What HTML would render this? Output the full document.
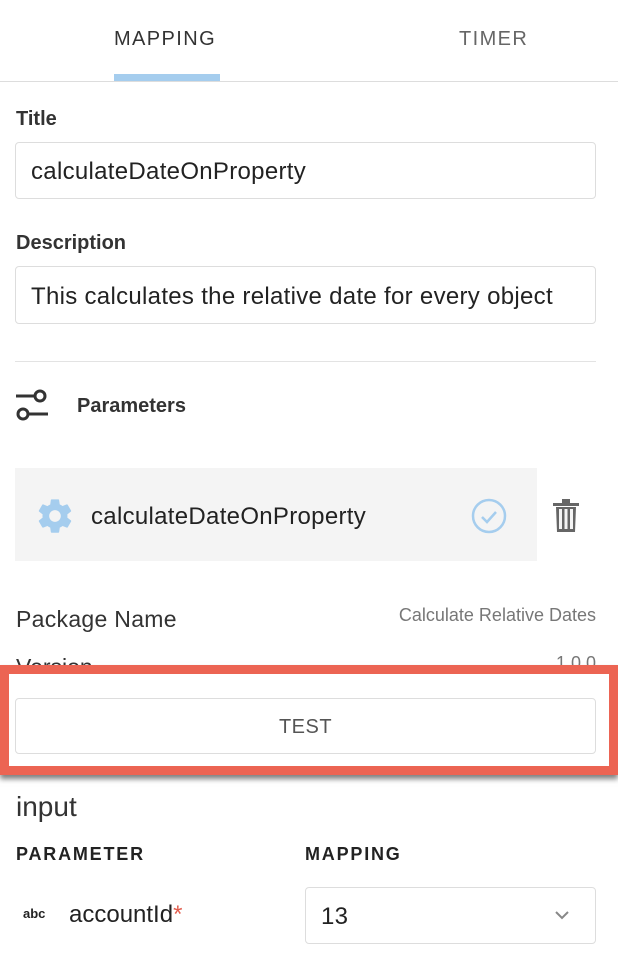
<!DOCTYPE html>
<html><head><style>
*{box-sizing:border-box;margin:0;padding:0}
body{width:618px;height:964px;overflow:hidden;background:#fff;font-family:"Liberation Sans",sans-serif;color:#333;position:relative}
.a{position:absolute;white-space:nowrap}
.inp{position:absolute;border:1px solid #ddd;border-radius:4px;background:#fff;font-size:24px;padding-left:15px;display:flex;align-items:center;overflow:hidden;color:#222;letter-spacing:.3px}
.lbl{font-weight:bold;font-size:20px;color:#333}
</style></head><body>
<div class="a" style="left:114px;top:28px;font-size:20px;letter-spacing:1.4px;color:#333;font-weight:500">MAPPING</div>
<div class="a" style="left:459px;top:28px;font-size:20px;letter-spacing:1.4px;color:#666">TIMER</div>
<div class="a" style="left:114px;top:74px;width:106px;height:7px;background:#a5cdee"></div>
<div class="a" style="left:0;top:81px;width:618px;height:1px;background:#ddd"></div>

<div class="a lbl" style="left:16px;top:108px">Title</div>
<div class="inp" style="left:15px;top:142px;width:581px;height:57px;padding-top:3px">calculateDateOnProperty</div>
<div class="a lbl" style="left:16px;top:232px">Description</div>
<div class="inp" style="left:15px;top:266px;width:581px;height:58px;padding-top:3px">This calculates the relative date for every object</div>
<div class="a" style="left:15px;top:361px;width:581px;height:1px;background:#e3e3e3"></div>

<svg class="a" style="left:16px;top:388px" width="32" height="34" viewBox="0 0 32 34"><g stroke="#333" stroke-width="3" fill="none"><line x1="0" y1="8" x2="20" y2="8"/><circle cx="24" cy="8" r="5"/><line x1="12" y1="26" x2="32" y2="26"/><circle cx="7" cy="26" r="5"/></g></svg>
<div class="a lbl" style="left:77px;top:395px">Parameters</div>

<div class="a" style="left:15px;top:468px;width:522px;height:93px;background:#f4f4f4"></div>
<svg class="a" style="left:35px;top:496px" width="40" height="40" viewBox="0 0 24 24"><path fill="#a5cdee" d="M19.4 13c.04-.33.06-.66.06-1s-.02-.67-.06-1l2.1-1.65c.2-.15.25-.42.12-.64l-2-3.46c-.12-.22-.39-.3-.61-.22l-2.49 1c-.52-.4-1.080-.73-1.69-.98l-.38-2.65C14.46 2.18 14.25 2 14 2h-4c-.25 0-.46.18-.49.42l-.38 2.65c-.61.25-1.170.59-1.69.98l-2.49-1c-.23-.09-.49 0-.61.22l-2 3.46c-.13.22-.07.49.12.64L4.57 11c-.04.33-.07.67-.07 1s.03.67.07 1l-2.11 1.65c-.19.15-.24.42-.12.64l2 3.46c.12.22.39.3.61.22l2.49-1c.52.4 1.08.73 1.69.98l.38 2.65c.03.24.24.42.49.42h4c.25 0 .46-.18.49-.42l.38-2.65c.61-.25 1.17-.59 1.69-.98l2.49 1c.23.09.49 0 .61-.22l2-3.46c.12-.22.07-.49-.12-.64L19.4 13zM12 15.5c-1.93 0-3.5-1.57-3.5-3.5s1.57-3.5 3.5-3.5 3.5 1.57 3.5 3.5-1.57 3.5-3.5 3.5z"/></svg>
<div class="a" style="left:91px;top:503px;font-size:24px;color:#222;letter-spacing:.3px">calculateDateOnProperty</div>
<svg class="a" style="left:469px;top:496px" width="40" height="40" viewBox="0 0 40 40"><circle cx="20" cy="20" r="16" fill="none" stroke="#a5cdee" stroke-width="2.5"/><path d="M13 21l5 5 9-10" fill="none" stroke="#a5cdee" stroke-width="2.5"/></svg>
<svg class="a" style="left:553px;top:499px" width="26" height="33" viewBox="0 0 26 33"><rect x="0" y="4" width="26" height="3" fill="#666"/><rect x="9" y="0" width="8" height="4" fill="#666"/><path d="M3 8h20l-1 25H4z" fill="#666"/><rect x="6" y="10" width="3" height="20" fill="#f4f4f4"/><rect x="11.5" y="10" width="3" height="20" fill="#f4f4f4"/><rect x="17" y="10" width="3" height="20" fill="#f4f4f4"/></svg>

<div class="a" style="left:16px;top:606px;font-size:23px;color:#333;letter-spacing:.3px">Package Name</div>
<div class="a" style="right:22px;top:605px;font-size:18px;color:#777">Calculate Relative Dates</div>
<div class="a" style="left:16px;top:654px;font-size:23px;color:#333">Version</div>
<div class="a" style="right:22px;top:653px;font-size:18px;color:#777">1.0.0</div>

<div class="a" style="left:0;top:665px;width:618px;height:110px;border:9px solid #ec6453;background:#fff;box-shadow:0 4px 5px rgba(0,0,0,.5)"></div>
<div class="a" style="left:15px;top:698px;width:581px;height:56px;border:1px solid #ddd;border-radius:4px;font-size:20px;color:#555;display:flex;align-items:center;justify-content:center;letter-spacing:.5px;padding-top:2px">TEST</div>

<div class="a" style="left:16px;top:791px;font-size:28px;color:#333">input</div>
<div class="a" style="left:16px;top:844px;font-size:18px;font-weight:bold;letter-spacing:1.8px;color:#222">PARAMETER</div>
<div class="a" style="left:305px;top:844px;font-size:18px;font-weight:bold;letter-spacing:1.8px;color:#222">MAPPING</div>
<div class="a" style="left:23px;top:906px;font-size:13px;font-weight:bold;color:#222">abc</div>
<div class="a" style="left:69px;top:901px;font-size:24px;color:#222">accountId<span style="color:#e25c4c">*</span></div>
<div class="inp" style="left:305px;top:887px;width:291px;height:57px;padding-top:3px">13</div>
<svg class="a" style="left:554px;top:910px" width="16" height="10" viewBox="0 0 16 10"><path d="M2 2l6 6 6-6" fill="none" stroke="#888" stroke-width="2"/></svg>
</body></html>
